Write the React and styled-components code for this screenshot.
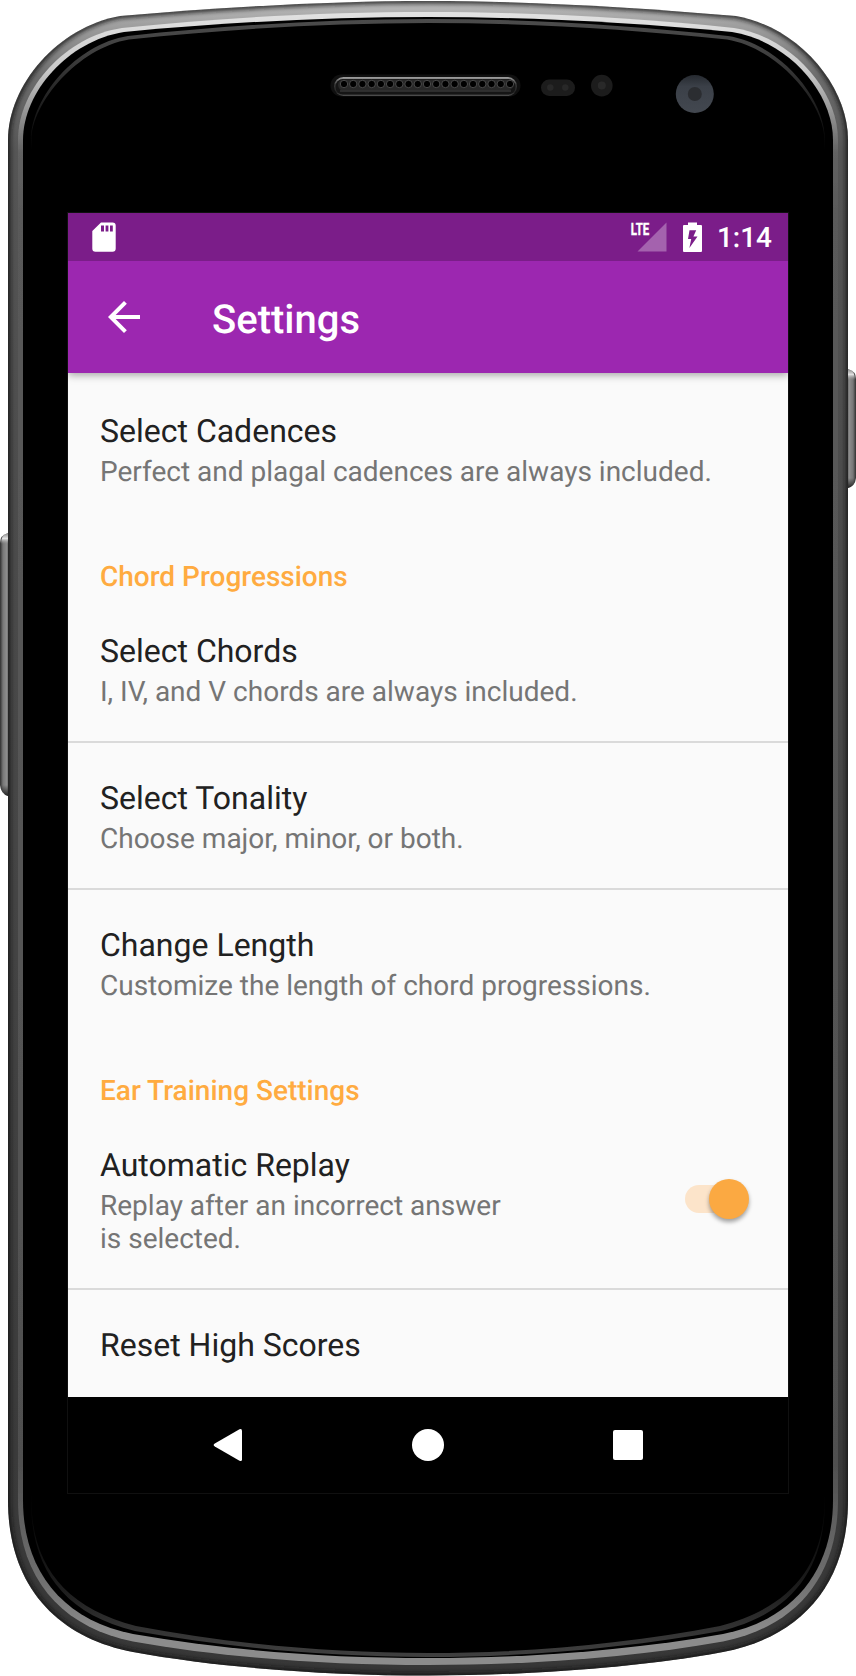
import React from "react";
import styled, { createGlobalStyle } from "styled-components";

const GlobalStyle = createGlobalStyle`
  * { box-sizing: border-box; }
  body {
    margin: 0;
    background: #fff;
    font-family: Roboto, "Liberation Sans", sans-serif;
    text-rendering: geometricPrecision;
  }
`;

const Device = styled.main`
  position: relative;
  width: 856px;
  height: 1676px;
  padding: 213px 68px 183px;
  overflow: hidden;
`;

const Shell = styled.svg`
  position: absolute;
  inset: 0;
  z-index: -1;
`;

const Screen = styled.div`
  display: flex;
  flex-direction: column;
  width: 720px;
  height: 1280px;
  background: #fafafa;
  box-shadow: 0 0 0 1px #101010;
`;

const StatusBar = styled.div`
  flex: none;
  display: flex;
  align-items: center;
  height: 48px;
  padding: 0 16px 0 20px;
  background: #7b1d89;
  color: #fff;
  svg { display: block; }
`;

const StatusIcons = styled.div`
  display: flex;
  align-items: center;
  gap: 16px;
  margin-left: auto;
`;

const Clock = styled.span`
  margin-left: -1px;
  padding-top: 2px;
  font-size: 28px;
  font-weight: 500;
  line-height: 46px;
`;

const AppBar = styled.header`
  flex: none;
  z-index: 1;
  display: flex;
  align-items: center;
  gap: 64px;
  height: 112px;
  padding-left: 32px;
  background: #9c27b0;
  color: #fff;
  box-shadow: 0 2px 8px rgba(0, 0, 0, 0.36);
  clip-path: inset(0 0 -16px 0);
`;

const AppTitle = styled.h1`
  margin: 5px 0 0;
  font-size: 40px;
  font-weight: 500;
  line-height: 48px;
`;

const BackButton = styled.button`
  display: block;
  width: 48px;
  height: 48px;
  padding: 0;
  border: 0;
  background: none;
  color: inherit;
  svg { display: block; }
`;

const Content = styled.section`
  flex: 1;
  min-height: 0;
  padding-top: 3px;
  overflow: hidden;
`;

const Category = styled.h2`
  height: 75px;
  margin: 0;
  padding: 39px 32px 0;
  color: #ffab40;
  font-size: 28px;
  font-weight: 500;
  line-height: 33px;
`;

const Row = styled.div`
  display: flex;
  align-items: center;
  justify-content: space-between;
  padding: 36px 32px 33px;
  border-bottom: ${(p) => (p.$divider ? "2px solid #dadada" : "0")};
`;

const RowTitle = styled.div`
  color: #212121;
  font-size: 32px;
  line-height: 38px;
`;

const Summary = styled.div`
  margin-top: 5px;
  max-width: ${(p) => (p.$narrow ? "420px" : "none")};
  color: #757575;
  font-size: 28px;
  line-height: 33px;
`;

const Track = styled.div`
  display: flex;
  align-items: center;
  justify-content: flex-end;
  width: 64px;
  height: 28px;
  margin: 0 7px 4px 0;
  border-radius: 14px;
  background: linear-gradient(90deg, #fce4ca 50px, transparent 50px);
`;

const Thumb = styled.div`
  flex: none;
  width: 40px;
  height: 40px;
  border-radius: 50%;
  background: #fba942;
  box-shadow: 0 3px 4px rgba(0, 0, 0, 0.36);
`;

const NavBar = styled.nav`
  flex: none;
  display: flex;
  align-items: center;
  justify-content: center;
  gap: 152px;
  height: 96px;
  background: #000;
  svg { display: block; }
`;

/* Symmetric closed outline of the phone body, given its left half. */
const outline = ({ x, top, tc, te, tm, bottom, bc, be, bm }) => {
  const m = ([a, b]) => `${856 - a} ${b}`;
  const s = ([a, b]) => `${a} ${b}`;
  return [
    `M${x} 140`,
    `C${s(tc[0])} ${s(tc[1])} ${s(te)}`,
    `C${s(tm[0])} ${s(tm[1])} 428 ${top}`,
    `C${m(tm[1])} ${m(tm[0])} ${m(te)}`,
    `C${m(tc[1])} ${m(tc[0])} ${856 - x} 140`,
    `V1500`,
    `C${m(bc[0])} ${m(bc[1])} ${m(be)}`,
    `C${m(bm[0])} ${m(bm[1])} 428 ${bottom}`,
    `C${s(bm[1])} ${s(bm[0])} ${s(be)}`,
    `C${s(bc[1])} ${s(bc[0])} ${x} 1500Z`,
  ].join(" ");
};

const bodyPath = outline({
  x: 8, top: 1, tc: [[8, 85], [58, 27]], te: [120, 16], tm: [[225, 7], [330, 1]],
  bottom: 1675.5, bc: [[8, 1588], [59, 1638]], be: [133, 1652], bm: [[220, 1668], [330, 1675.5]],
});
const lipPath = outline({
  x: 18, top: 12, tc: [[18, 88], [67, 36]], te: [122, 28], tm: [[226, 17], [330, 12]],
  bottom: 1665, bc: [[18, 1578], [61, 1627]], be: [133, 1641.5], bm: [[225, 1658], [330, 1665]],
});
const glassPath = outline({
  x: 23, top: 17, tc: [[23, 92], [68, 41]], te: [124, 32], tm: [[228, 22], [330, 17]],
  bottom: 1658, bc: [[23, 1570], [62, 1620]], be: [133, 1634], bm: [[230, 1651], [330, 1658]],
});
const rimOuter = outline({
  x: 31, top: 19, tc: [[31, 98], [76, 44]], te: [128, 36], tm: [[230, 25], [330, 19]],
  bottom: 1657, bc: [[31, 1566], [61, 1613]], be: [135, 1631], bm: [[230, 1648], [330, 1657]],
});
const rimInner = outline({
  x: 31.5, top: 23, tc: [[31.5, 103], [78, 48]], te: [129, 39.5], tm: [[230, 29], [330, 23]],
  bottom: 1653, bc: [[31.5, 1563], [63, 1607]], be: [136, 1626], bm: [[230, 1644], [330, 1653]],
});

const Stops = ({ list }) => list.map(([o, c]) => <stop key={o} offset={o} stopColor={c} />);

const PhoneShell = () => (
  <Shell width="856" height="1676" viewBox="0 0 856 1676" aria-hidden="true">
    <defs>
      <linearGradient id="body" x1="0" y1="0" x2="0" y2="1">
        <Stops list={[[0, "#bcbcbc"], [0.014, "#a0a0a0"], [0.045, "#6c6c6c"], [0.09, "#565656"], [0.3, "#4c4c4c"], [1, "#373737"]]} />
      </linearGradient>
      <linearGradient id="lip" x1="0" y1="0" x2="0" y2="1">
        <Stops list={[[0, "#e2e2e2"], [0.035, "#cacaca"], [0.055, "#a0a0a0"], [0.085, "#626262"], [0.12, "#5a5a5a"], [0.88, "#505050"], [0.95, "#707070"], [0.98, "#8c8c8c"], [1, "#8c8c8c"]]} />
      </linearGradient>
      <linearGradient id="rim" gradientUnits="userSpaceOnUse" x1="0" y1="19" x2="0" y2="1657">
        <Stops list={[[0, "#4c4c4c"], [0.02, "#404040"], [0.045, "#262626"], [0.075, "#080808"], [0.08, "#000"], [0.9, "#000"], [0.96, "#1e1e1e"], [0.98, "#303030"], [1, "#404040"]]} />
      </linearGradient>
      <linearGradient id="key" x1="0" x2="1">
        <Stops list={[[0, "#303030"], [0.3, "#777"], [0.65, "#8c8c8c"], [1, "#505050"]]} />
      </linearGradient>
      <linearGradient id="keyRight" x1="0" x2="1">
        <Stops list={[[0, "#505050"], [0.35, "#8c8c8c"], [0.7, "#777"], [1, "#303030"]]} />
      </linearGradient>
      <linearGradient id="keyCap" x1="0" y1="0" x2="0" y2="1">
        <stop offset="0" stopColor="#888" />
        <stop offset="0.5" stopColor="#e0e0e0" />
        <stop offset="1" stopColor="#999" stopOpacity="0" />
      </linearGradient>
      <linearGradient id="keyFoot" x1="0" y1="0" x2="0" y2="1">
        <stop offset="0" stopColor="#222" stopOpacity="0" />
        <stop offset="1" stopColor="#222" />
      </linearGradient>
      <linearGradient id="grille" x1="0" y1="0" x2="0" y2="1">
        <Stops list={[[0, "#a0a0a0"], [0.18, "#707070"], [0.4, "#3a3a3a"], [0.8, "#242424"], [1, "#505050"]]} />
      </linearGradient>
      <linearGradient id="lens" x1="0" y1="0" x2="0" y2="1">
        <Stops list={[[0, "#262a30"], [0.3, "#3b4048"], [1, "#434850"]]} />
      </linearGradient>
      <clipPath id="bodyClip"><path d={bodyPath} /></clipPath>
      <filter id="soft" x="-2%" y="-2%" width="104%" height="104%"><feGaussianBlur stdDeviation="2" /></filter>
      <filter id="fine" x="-2%" y="-2%" width="104%" height="104%"><feGaussianBlur stdDeviation="0.6" /></filter>
    </defs>

    <path d="M10 533H8Q0 535 0 543V785Q1 794 8 796H10Z" fill="url(#key)" />
    <path d="M9 533H8Q1 535 1 544H9Z" fill="url(#keyCap)" />
    <path d="M0 785Q1 794 8 796V785Z" fill="url(#keyFoot)" />
    <path d="M846 369H848Q856 371 856 379V478Q855 486 848 488H846Z" fill="url(#keyRight)" />
    <path d="M847 369H848Q855 371 855 380H847Z" fill="url(#keyCap)" />
    <path d="M856 478Q855 486 848 488V478Z" fill="url(#keyFoot)" />

    <path d={bodyPath} fill="url(#body)" />
    <g clipPath="url(#bodyClip)">
      <path d={bodyPath} fill="none" stroke="#181818" strokeWidth="5" opacity="0.85" filter="url(#soft)" />
    </g>
    <path d={lipPath} fill="url(#lip)" filter="url(#fine)" />
    <path d={glassPath} fill="#000" filter="url(#fine)" />
    <path d={`${rimOuter} ${rimInner}`} fillRule="evenodd" fill="url(#rim)" />

    <rect x="330.5" y="74.5" width="190" height="22" rx="11" fill="#101010" />
    <rect x="334" y="77" width="183" height="19" rx="9.5" fill="url(#grille)" />
    <rect x="335.5" y="79" width="180" height="15.5" rx="7.5" fill="#151515" />
    <rect x="338" y="79.5" width="175" height="11" rx="5.5" fill="#282828" />
    <path d="M340 91H511" stroke="#363636" strokeWidth="1.5" />
    {Array.from({ length: 19 }, (_, i) => (
      <circle key={i} cx={344 + i * 9.22} cy="84" r="3.7" fill="#000" stroke="#585858" strokeWidth="0.8" />
    ))}
    <rect x="541" y="79.5" width="34" height="16.5" rx="8.2" fill="#1c1c1c" />
    <circle cx="550.3" cy="87.5" r="3.2" fill="#282828" />
    <circle cx="565.3" cy="87.5" r="3.2" fill="#282828" />
    <circle cx="601.8" cy="85.6" r="10.8" fill="#1c1c1c" />
    <circle cx="601.8" cy="85.6" r="4" fill="#292929" />
    <circle cx="694.8" cy="94" r="19" fill="url(#lens)" />
    <circle cx="694.8" cy="94" r="7" fill="#2b2d31" />
  </Shell>
);

const SdCardIcon = () => (
  <svg width="36" height="36" viewBox="0 0 36 36" fill="#fff">
    <path fillRule="evenodd" d="M13 3.5H24.5Q27.7 3.5 27.7 6.5V29.5Q27.7 32.7 24.5 32.7H7.5Q4.3 32.7 4.3 29.5V12ZM13 6.5V12.5H16V6.5ZM17.6 6.5V12.5H20.4V6.5ZM22 6.5V12.5H24.8V6.5Z" />
  </svg>
);

const SignalIcon = () => (
  <svg width="37" height="46" viewBox="0 -8 37 46">
    <path d="M36.5 .5V29.5H7.5Z" fill="#a462ae" />
    <text x="0.8" y="13.2" fill="#fff" stroke="#fff" strokeWidth="0.4" fontFamily="Roboto" fontSize="17" fontWeight="700" textLength="18.5" lengthAdjust="spacingAndGlyphs">LTE</text>
  </svg>
);

const BatteryIcon = () => (
  <svg width="19" height="30" viewBox="0 0 19 30">
    <path fillRule="evenodd" fill="#fff" d="M5 .5H14V3H18Q19 3 19 4V29Q19 30 18 30H1Q0 30 0 29V4Q0 3 1 3H5ZM6.5 8.2L5 17H8.2L6.4 26L14.5 14.5H10.4L13.2 8.2Z" />
  </svg>
);

const Preference = ({ title, summary, divider, toggle }) => (
  <Row $divider={divider}>
    <div>
      <RowTitle>{title}</RowTitle>
      {summary && <Summary $narrow={toggle}>{summary}</Summary>}
    </div>
    {toggle && <Track role="switch" aria-checked="true"><Thumb /></Track>}
  </Row>
);

export default function App() {
  return (
    <>
      <GlobalStyle />
      <Device>
        <PhoneShell />
        <Screen>
          <StatusBar>
            <SdCardIcon />
            <StatusIcons>
              <SignalIcon />
              <BatteryIcon />
              <Clock>1:14</Clock>
            </StatusIcons>
          </StatusBar>
          <AppBar>
            <BackButton aria-label="Back">
              <svg width="48" height="48" viewBox="0 0 24 24" fill="currentColor">
                <path d="M20 11H7.83l5.59-5.59L12 4l-8 8 8 8 1.41-1.41L7.83 13H20v-2z" />
              </svg>
            </BackButton>
            <AppTitle>Settings</AppTitle>
          </AppBar>
          <Content>
            <Preference title="Select Cadences" summary="Perfect and plagal cadences are always included." />
            <Category>Chord Progressions</Category>
            <Preference divider title="Select Chords" summary="I, IV, and V chords are always included." />
            <Preference divider title="Select Tonality" summary="Choose major, minor, or both." />
            <Preference title="Change Length" summary="Customize the length of chord progressions." />
            <Category>Ear Training Settings</Category>
            <Preference divider toggle title="Automatic Replay" summary="Replay after an incorrect answer is selected." />
            <Preference title="Reset High Scores" />
          </Content>
          <NavBar>
            <svg width="48" height="48" viewBox="0 0 48 48" fill="#fff">
              <path d="M10.8 22.5L35.5 8.2Q38 7.2 38 10V38.2Q38 40.8 35.5 39.8L10.8 25.5Q8.5 24 10.8 22.5Z" />
            </svg>
            <svg width="48" height="48" viewBox="0 0 48 48" fill="#fff"><circle cx="24" cy="24" r="16" /></svg>
            <svg width="48" height="48" viewBox="0 0 48 48" fill="#fff"><rect x="9" y="9" width="30" height="30" rx="2" /></svg>
          </NavBar>
        </Screen>
      </Device>
    </>
  );
}
